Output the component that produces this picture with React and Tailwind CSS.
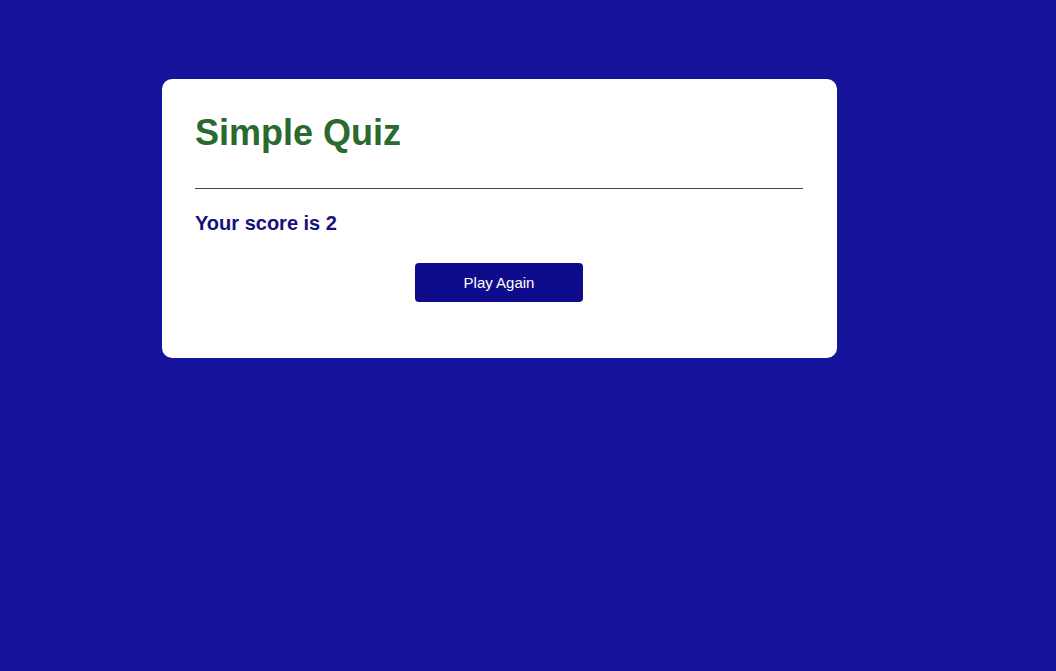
import React from 'react';

export default function App() {
  return (
    <div className="min-h-screen w-full bg-[#16139b] pt-[79px] pl-[162px]" style={{ fontFamily: '"Liberation Sans", Arial, sans-serif' }}>
      <div className="w-[675px] bg-white rounded-[10px] pl-[33px] pr-[34px] pt-[32px] pb-[56px]">
        <h1 className="text-[36px] leading-[44px] font-bold text-[#2a6a2f]">Simple Quiz</h1>
        <hr className="mt-[33px] border-t border-[#444]" />
        <h2 className="mt-[23px] text-[20px] leading-[23px] font-bold text-[#15107c]">Your score is 2</h2>
        <div className="mt-[28px] flex justify-center">
          <button className="w-[168px] h-[39px] pt-[2px] bg-[#0f0c8c] text-white text-[15px] rounded-[4px]">
            Play Again
          </button>
        </div>
      </div>
    </div>
  );
}
